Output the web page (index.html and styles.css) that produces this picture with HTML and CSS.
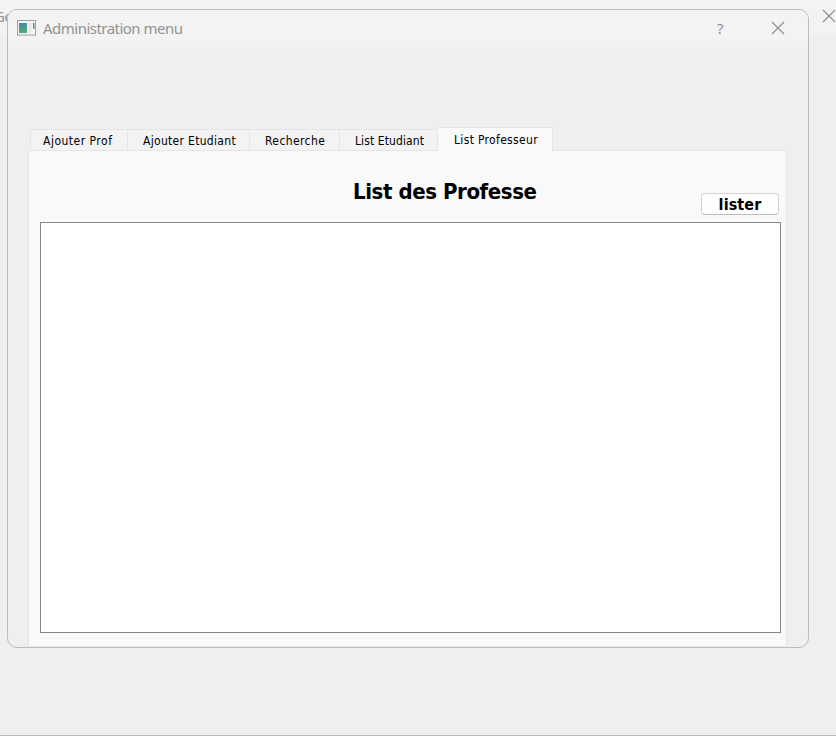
FILE: index.html
```
<!DOCTYPE html>
<html lang="fr">
<head>
<meta charset="utf-8">
<title>Administration menu</title>
<link rel="stylesheet" href="styles.css">
</head>
<body>
<div class="parent-window">
  <header class="parent-title">
    <span class="parent-name">Ge</span>
    <svg class="parent-close" width="14" height="14" viewBox="0 0 14 14"><path d="M1 1L13 13M13 1L1 13"/></svg>
  </header>
</div>
<section class="dialog">
  <header class="titlebar">
    <svg class="app-icon" width="19" height="16" viewBox="0 0 19 16">
      <defs><linearGradient id="tint" x1="0" y1="0" x2="0.4" y2="1"><stop offset="0" stop-color="#4682a8"/><stop offset="1" stop-color="#55a87c"/></linearGradient></defs>
      <rect x="0.5" y="0.5" width="18" height="14.5" fill="#f6f6f6" stroke="#9a9fa6"/>
      <rect x="2" y="3" width="8" height="10" fill="url(#tint)"/>
      <rect x="11" y="3" width="4" height="10" fill="#e9ebeb"/>
      <rect x="16" y="3" width="1.5" height="6" fill="url(#tint)"/>
    </svg>
    <span class="title">Administration menu</span>
    <span class="help">?</span>
    <svg class="close" width="14" height="14" viewBox="0 0 14 14"><path d="M1 1L13 13M13 1L1 13"/></svg>
  </header>
  <div class="content">
    <nav class="tabs">
      <div class="tab prof"><span>Ajouter Prof</span></div>
      <div class="tab etudiant"><span>Ajouter Etudiant</span></div>
      <div class="tab search"><span>Recherche</span></div>
      <div class="tab list"><span>List Etudiant</span></div>
      <div class="tab active"><span>List Professeur</span></div>
    </nav>
    <main class="panel">
      <div class="toolbar">
        <h1>List des Professe</h1>
        <button>lister</button>
      </div>
      <div class="list-view"></div>
    </main>
  </div>
</section>
</body>
</html>
```
FILE: styles.css
```
* { box-sizing: border-box; }
body { margin: 0; height: 742px; overflow: hidden; background: #fff; font-family: "DejaVu Sans Condensed", "DejaVu Sans", sans-serif; }
.parent-window { height: 736px; background: #efefef; border-bottom: 1px solid #bdbdbd; }
.parent-title { display: flex; justify-content: space-between; height: 35px; background: #f3f3f3; overflow: hidden; }
.parent-name { margin: 5px 0 0 -6px; font: 15px/22px "Noto Sans", sans-serif; letter-spacing: -0.7px; color: #999; }
.parent-close { flex: none; margin: 9px 0 0 0; }
svg path { fill: none; stroke: #8f8f8f; stroke-width: 1.2; }
.dialog { position: absolute; left: 7px; top: 9px; width: 802px; height: 639px; background: #efefef; border: 1px solid #bdbdbd; border-radius: 10px; overflow: hidden; }
.titlebar { display: flex; align-items: flex-start; height: 37px; padding-left: 9px; background: #f3f3f3; color: #929292; font: 15px/22px "Noto Sans", sans-serif; }
.app-icon { flex: none; margin-top: 10px; }
.title { width: 150px; margin: 7px 0 0 7px; white-space: nowrap; letter-spacing: -0.52px; }
.help { margin: 7px 0 0 524px; width: 10px; }
.close { flex: none; margin: 11px 0 0 44px; }
.content { padding: 80px 21px 0 20px; }
.tabs { display: flex; align-items: flex-end; height: 24px; margin: 0 0 -1px 2px; position: relative; z-index: 1; }
.tab { height: 22px; border: 1px solid #e5e5e5; border-right: 0; background: #f3f3f3; font-size: 12px; line-height: 22px; white-space: nowrap; color: #000; letter-spacing: 0.33px; }
.prof { width: 97px; padding-left: 12px; letter-spacing: 0.5px; }
.etudiant { width: 122px; padding-left: 15px; letter-spacing: 0.31px; }
.search { width: 90px; padding-left: 15px; letter-spacing: 0.4px; }
.list { width: 98px; padding-left: 15px; letter-spacing: 0.1px; }
.active { width: 116px; height: 24px; padding-left: 16px; border-right: 1px solid #e5e5e5; border-bottom: 0; background: #f9f9f9; line-height: 24px; }
.panel { width: 759px; height: 497px; padding: 0 5px 0 11px; border: 1px solid #e5e5e5; background: #f9f9f9; }
.toolbar { display: flex; height: 71px; }
h1 { width: 184px; height: 35px; margin: 24px 0 0 313px; white-space: nowrap; font-size: 22px; line-height: 34px; letter-spacing: -0.42px; }
button { width: 78px; height: 22px; margin: 42px 0 0 164px; padding: 1px 0 0; border: 1px solid #d2d2d2; border-bottom-color: #bcbcbc; border-radius: 4px; background: #fefefe; color: #000; font: bold 16px/20px "DejaVu Sans Condensed", sans-serif; letter-spacing: 0.1px; }
.list-view { width: 741px; height: 411px; border: 1px solid #828790; background: #fff; }
```
